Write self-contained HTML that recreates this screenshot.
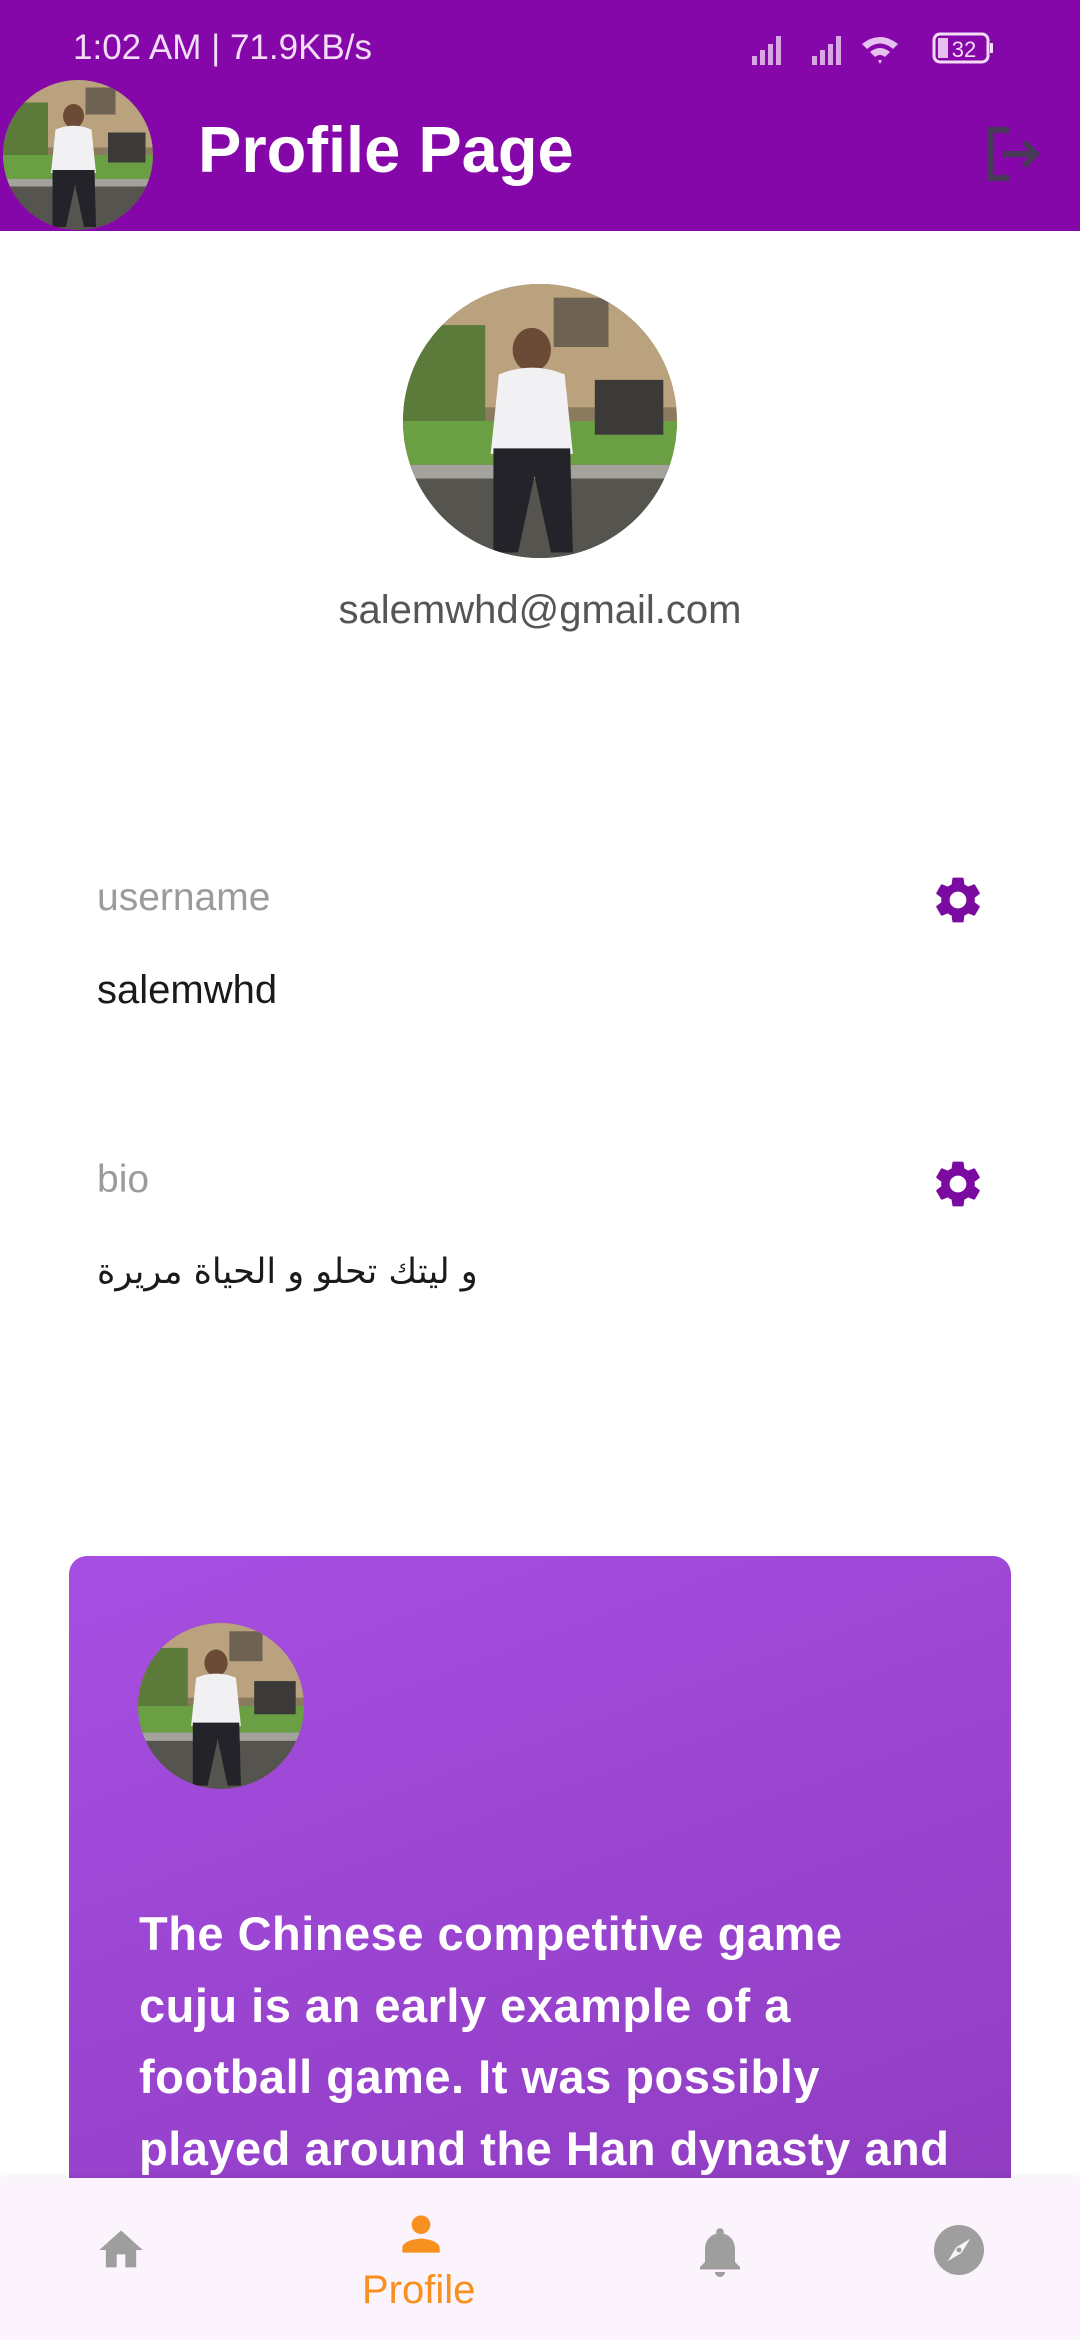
<!DOCTYPE html>
<html><head><meta charset="utf-8"><style>
*{margin:0;padding:0;box-sizing:border-box}
body{width:1080px;height:2340px;position:relative;background:#fff;font-family:"Liberation Sans",sans-serif;overflow:hidden}
.abs{position:absolute}
.hdr{left:0;top:0;width:1080px;height:231px;background:#8506A9}
.av{position:absolute;border-radius:50%;overflow:hidden}
.av svg{width:100%;height:100%;display:block}
.lbl{color:#9b9b9b;font-size:39px}
.val{color:#1a1a1a;font-size:40px}
.card{left:69px;top:1556px;width:942px;height:700px;border-radius:18px;background:linear-gradient(160deg,#A64EE2,#8E3BBF)}
.ct{left:139px;top:1898px;width:900px;color:#fff;font-weight:bold;font-size:47px;line-height:71.6px;white-space:nowrap;letter-spacing:0.5px}
.nav{left:0;top:2178px;width:1080px;height:162px;background:#FCF4FC;box-shadow:0 -2px 6px rgba(0,0,0,.06)}
</style></head><body>
<svg width="0" height="0" style="position:absolute"><defs>
<symbol id="ph" viewBox="0 0 100 100">
<rect width="100" height="100" fill="#8a7a5e"/>
<rect x="0" y="0" width="100" height="45" fill="#b9a27d"/>
<rect x="55" y="5" width="20" height="18" fill="#6e6252"/>
<rect x="0" y="15" width="30" height="45" fill="#5c7a3a"/>
<rect x="0" y="50" width="100" height="18" fill="#6aa043"/>
<rect x="0" y="66" width="100" height="34" fill="#56544f"/>
<rect x="0" y="66" width="100" height="5" fill="#a4a29c"/>
<rect x="70" y="35" width="25" height="20" fill="#3b3a38"/>
<ellipse cx="47" cy="24" rx="7" ry="8" fill="#6b4a36"/>
<path d="M35 33 Q47 28 59 33 L62 62 L32 62 Z" fill="#f1f1f3"/>
<path d="M33 60 L61 60 L62 98 L54 98 L48 70 L42 98 L33 98 Z" fill="#25232a"/>
</symbol>
<path id="gear" fill="#7A0AA0" d="M19.14 12.94c.04-.3.06-.61.06-.94 0-.32-.02-.64-.07-.94l2.03-1.58a.49.49 0 0 0 .12-.61l-1.92-3.32a.488.488 0 0 0-.59-.22l-2.39.96c-.5-.38-1.03-.7-1.62-.94l-.36-2.54a.484.484 0 0 0-.48-.41h-3.84c-.24 0-.43.17-.47.41l-.36 2.54c-.59.24-1.13.57-1.62.94l-2.39-.96c-.22-.08-.47 0-.59.22L2.74 8.87c-.12.21-.08.47.12.61l2.03 1.58c-.05.3-.09.63-.09.94s.02.64.07.94l-2.03 1.58a.49.49 0 0 0-.12.61l1.92 3.32c.12.22.37.29.59.22l2.39-.96c.5.38 1.03.7 1.62.94l.36 2.54c.05.24.24.41.48.41h3.84c.24 0 .44-.17.47-.41l.36-2.54c.59-.24 1.13-.56 1.62-.94l2.39.96c.22.08.47 0 .59-.22l1.92-3.32c.12-.22.07-.47-.12-.61l-2.01-1.58zM12 15.6c-1.98 0-3.6-1.62-3.6-3.6s1.62-3.6 3.6-3.6 3.6 1.62 3.6 3.6-1.62 3.6-3.6 3.6z"/>
</defs></svg>

<div class="abs hdr"></div>
<div class="abs" style="left:73px;top:28px;color:#f3dcf6;font-size:35px">1:02 AM | 71.9KB/s</div>
<div class="abs" style="left:750px;top:32px;width:260px;height:36px">
<svg width="260" height="36" viewBox="0 0 260 36"><g fill="#d9a6e6"><rect x="2" y="24" width="5" height="9"/><rect x="10" y="18" width="5" height="15"/><rect x="18" y="12" width="5" height="21"/><rect x="26" y="4" width="5" height="29"/><rect x="62" y="24" width="5" height="9"/><rect x="70" y="18" width="5" height="15"/><rect x="78" y="12" width="5" height="21"/><rect x="86" y="4" width="5" height="29"/></g>
<path d="M112 12 Q130 -2 148 12 L143 17 Q130 6 117 17Z M120 20 Q130 12 140 20 L135 25 Q130 21 125 25Z M128 28 L132 28 L130 32Z" fill="#e6c0ee"/>
<rect x="184" y="2" width="54" height="28" rx="6" fill="none" stroke="#f3dcf6" stroke-width="3"/><rect x="240" y="11" width="3" height="10" fill="#f3dcf6"/><rect x="188" y="6" width="10" height="20" fill="#e6c0ee"/>
<text x="214" y="25" font-size="22" fill="#f3dcf6" text-anchor="middle" font-family="Liberation Sans">32</text></svg></div>
<div class="av" style="left:3px;top:80px;width:150px;height:150px"><svg><use href="#ph"/></svg></div>
<div class="abs" style="left:198px;top:110px;color:#fff;font-weight:bold;font-size:65px;line-height:80px">Profile Page</div>
<svg class="abs" style="left:984px;top:126px" width="60" height="56" viewBox="0 0 60 56"><path d="M26 4 H6 V52 H26" fill="none" stroke="#4a3a5a" stroke-width="6"/><path d="M20 28 H50 M40 16 L52 28 L40 40" fill="none" stroke="#4a3a5a" stroke-width="6"/></svg>

<div class="av" style="left:403px;top:284px;width:274px;height:274px"><svg><use href="#ph"/></svg></div>
<div class="abs" style="left:0;top:588px;width:1080px;text-align:center;color:#555;font-size:40px">salemwhd@gmail.com</div>

<div class="abs lbl" style="left:97px;top:876px">username</div>
<div class="abs val" style="left:97px;top:968px">salemwhd</div>
<div class="abs lbl" style="left:97px;top:1158px">bio</div>
<div class="abs val" style="left:97px;top:1252px;font-family:'DejaVu Sans',sans-serif;font-size:35px">و ليتك تحلو و الحياة مريرة</div>
<svg class="abs" style="left:930px;top:872px" width="56" height="56" viewBox="0 0 24 24"><use href="#gear"/></svg>
<svg class="abs" style="left:930px;top:1156px" width="56" height="56" viewBox="0 0 24 24"><use href="#gear"/></svg>

<div class="abs card"></div>
<div class="av" style="left:138px;top:1623px;width:166px;height:166px"><svg><use href="#ph"/></svg></div>
<div class="abs ct">The Chinese competitive game<br>cuju is an early example of a<br>football game. It was possibly<br>played around the Han dynasty and</div>

<div class="abs nav"></div>
<svg class="abs" style="left:91px;top:2224px" width="60" height="52" viewBox="0 0 24 24"><path fill="#9e9e9e" d="M10 20v-6h4v6h5v-8h3L12 3 2 12h3v8z"/></svg>
<svg class="abs" style="left:391px;top:2206px" width="60" height="56" viewBox="0 0 24 24"><path fill="#F7901E" d="M12 12c2.2 0 4-1.8 4-4s-1.8-4-4-4-4 1.8-4 4 1.8 4 4 4zm0 2c-2.7 0-8 1.3-8 4v2h16v-2c0-2.7-5.3-4-8-4z"/></svg>
<div class="abs" style="left:362px;top:2268px;color:#F7901E;font-size:40px">Profile</div>
<svg class="abs" style="left:690px;top:2222px" width="60" height="60" viewBox="0 0 24 24"><path fill="#9e9e9e" d="M12 22c1.1 0 2-.9 2-2h-4c0 1.1.9 2 2 2zm6-6v-5c0-3.1-1.6-5.6-4.5-6.3V4c0-.8-.7-1.5-1.5-1.5S10.5 3.2 10.5 4v.7C7.6 5.4 6 7.9 6 11v5l-2 2v1h16v-1l-2-2z"/></svg>
<svg class="abs" style="left:929px;top:2220px" width="60" height="60" viewBox="0 0 24 24"><circle cx="12" cy="12" r="10" fill="#9e9e9e"/><path fill="#FCF4FC" d="M16.5 7.5 10.9 10.9 7.5 16.5 13.1 13.1Z"/><circle cx="12" cy="12" r="1" fill="#9e9e9e"/></svg>
</body></html>
